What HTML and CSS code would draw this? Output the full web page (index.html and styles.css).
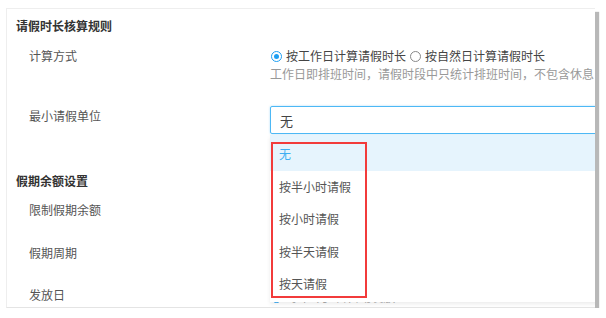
FILE: index.html
```html
<!DOCTYPE html>
<html lang="zh-CN">
<head>
    <meta charset="UTF-8">
    <meta name="viewport" content="width=device-width, initial-scale=1.0">
    <title>请假规则设置</title>
    <link rel="stylesheet" href="styles.css">
</head>
<body>
    <div class="card">
        <div class="section-title first">请假时长核算规则</div>

        <div class="row row-calc">
            <div class="label">计算方式</div>
            <div class="control">
                <div class="radios">
                    <span class="radio checked"></span><span class="radio-text">按工作日计算请假时长</span>
                    <span class="radio"></span><span class="radio-text">按自然日计算请假时长</span>
                </div>
                <div class="hint">工作日即排班时间，请假时段中只统计排班时间，不包含休息日和节假日</div>
            </div>
        </div>

        <div class="row row-unit">
            <div class="label">最小请假单位</div>
            <div class="control">
                <div class="select">
                    <div class="select-value">无</div>
                    <div class="dropdown">
                        <div class="option active">无</div>
                        <div class="option">按半小时请假</div>
                        <div class="option">按小时请假</div>
                        <div class="option">按半天请假</div>
                        <div class="option">按天请假</div>
                        <div class="mark"></div>
                    </div>
                </div>
            </div>
        </div>

        <div class="section-title second">假期余额设置</div>

        <div class="row row-plain">
            <div class="label">限制假期余额</div>
            <div class="control"></div>
        </div>
        <div class="row row-plain">
            <div class="label">假期周期</div>
            <div class="control"></div>
        </div>
        <div class="row row-plain">
            <div class="label">发放日</div>
            <div class="control faint">
                <span class="radio checked"></span><span class="radio-text">每年1月1日自动发放</span>
            </div>
        </div>
    </div>
</body>
</html>
```

FILE: styles.css
```css
body {
    margin: 0;
    background-color: #ffffff;
    font-family: "Noto Sans CJK SC", "Noto Sans", sans-serif;
    font-size: 12px;
    color: #555;
}
.card {
    margin: 8px 0 0 6px;
    width: 589px;
    height: 300px;
    border: 1px solid #eeeeee;
    border-right: none;
    border-bottom: 1px solid #e4e4e4;
    background: #ffffff;
    box-shadow: 4px 4px 1px rgba(0, 0, 0, 0.28);
    padding: 7px 0 0 9px;
    box-sizing: border-box;
    overflow: hidden;
    position: relative;
}
.section-title {
    font-weight: bold;
    color: #333;
    line-height: 20px;
}
.section-title.second {
    margin-top: 37px;
}
.row {
    display: grid;
    grid-template-columns: 254px 1fr;
    line-height: 18px;
}
.label {
    padding-left: 13px;
    color: #555;
}
.row-calc {
    margin-top: 11px;
}
.radios {
    display: flex;
    align-items: center;
    white-space: nowrap;
    color: #444;
}
.radio {
    display: inline-block;
    width: 11px;
    height: 11px;
    border: 1px solid #888;
    border-radius: 50%;
    margin: 0 4px 0 1px;
    box-sizing: border-box;
    position: relative;
}
.radio.checked {
    border-color: #1e9ff2;
}
.radio.checked::after {
    content: "";
    position: absolute;
    left: 2px;
    top: 2px;
    width: 5px;
    height: 5px;
    border-radius: 50%;
    background: #1e9ff2;
}
.radio-text {
    margin-right: 3px;
}
.hint {
    color: #999;
    white-space: nowrap;
}
.row-unit {
    margin-top: 23px;
}
.row-unit .label {
    padding-top: 1px;
}
.select {
    position: relative;
    z-index: 2;
}
.select-value {
    height: 28px;
    line-height: 28px;
    border: 1px solid #4db8f5;
    border-radius: 2px;
    box-shadow: 0 0 2px rgba(62, 178, 245, 0.5);
    padding-left: 9px;
    box-sizing: border-box;
    color: #444;
    font-size: 13px;
    margin-right: -10px;
}
.dropdown {
    position: absolute;
    left: 0;
    right: -10px;
    top: 29px;
    background: #ffffff;
    box-shadow: 0 2px 4px rgba(0, 0, 0, 0.08);
    padding-bottom: 1px;
}
.option {
    height: 32.5px;
    line-height: 32px;
    padding-left: 9px;
    color: #555;
}
.option.active {
    background: #e6f4fd;
    color: #3eaef2;
    padding-top: 3px;
}
.mark {
    position: absolute;
    left: 1px;
    top: 7px;
    width: 96px;
    height: 156px;
    border: 2px solid #f23b3b;
    box-sizing: border-box;
}
.row-plain {
    height: 18px;
}
.section-title.second + .row-plain {
    margin-top: 10px;
}
.row-plain + .row-plain {
    margin-top: 25px;
}
.row-plain:last-child {
    margin-top: 24px;
}
.faint {
    display: flex;
    align-items: center;
    color: #aaa;
    padding-top: 2px;
}
```
